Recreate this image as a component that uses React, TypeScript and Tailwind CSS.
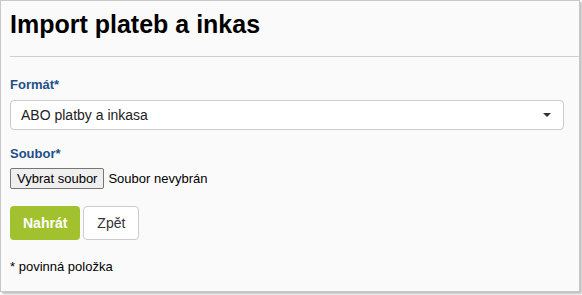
export default function App() {
  return (
    <div className="w-[582px] h-[295px] bg-white font-['Liberation_Sans',Arial,sans-serif] text-[#222]">
      <div className="w-[580px] h-[292px] bg-[#fafafa] border border-[#c8c8c8] shadow-[2px_2px_2px_rgba(0,0,0,0.25)] flex flex-col">
        {/* header */}
        <div className="ml-[9px] pt-[9px] pb-[18px] border-b border-[#cfcfcf]">
          <h1 className="text-[25px] leading-[28px] font-bold text-black">Import plateb a inkas</h1>
        </div>

        <div className="pl-[9px] pr-[15px] flex flex-col">
          <label className="mt-[20px] text-[13px] leading-[16px] font-bold text-[#1d4f86]">Formát*</label>
          <div className="mt-[7px] h-[30px] bg-white border border-[#cccccc] rounded-[4px] flex items-center justify-between pl-[10px] pr-[12px]">
            <span className="text-[14px]">ABO platby a inkasa</span>
            <svg width="8" height="4" viewBox="0 0 8 4">
              <path d="M0 0h8L4 4z" fill="#333" />
            </svg>
          </div>

          <label className="mt-[16px] text-[13px] leading-[16px] font-bold text-[#1d4f86]">Soubor*</label>
          <div className="mt-[6px] flex items-center gap-[4px]">
            <button className="h-[21px] px-[6px] text-[13px] leading-none text-black bg-[#efefef] border border-[#767676] rounded-[2px]">
              Vybrat soubor
            </button>
            <span className="text-[13px] text-black">Soubor nevybrán</span>
          </div>

          <div className="mt-[17px] flex gap-[3px]">
            <button className="h-[34px] px-[13px] text-[14px] font-bold text-white bg-[#a2c12e] rounded-[4px]">
              Nahrát
            </button>
            <button className="h-[34px] px-[13px] text-[14px] text-[#333] bg-white border border-[#cccccc] rounded-[4px]">
              Zpět
            </button>
          </div>

          <p className="mt-[19px] text-[13px] leading-[16px] text-black">* povinná položka</p>
        </div>
      </div>
    </div>
  );
}
